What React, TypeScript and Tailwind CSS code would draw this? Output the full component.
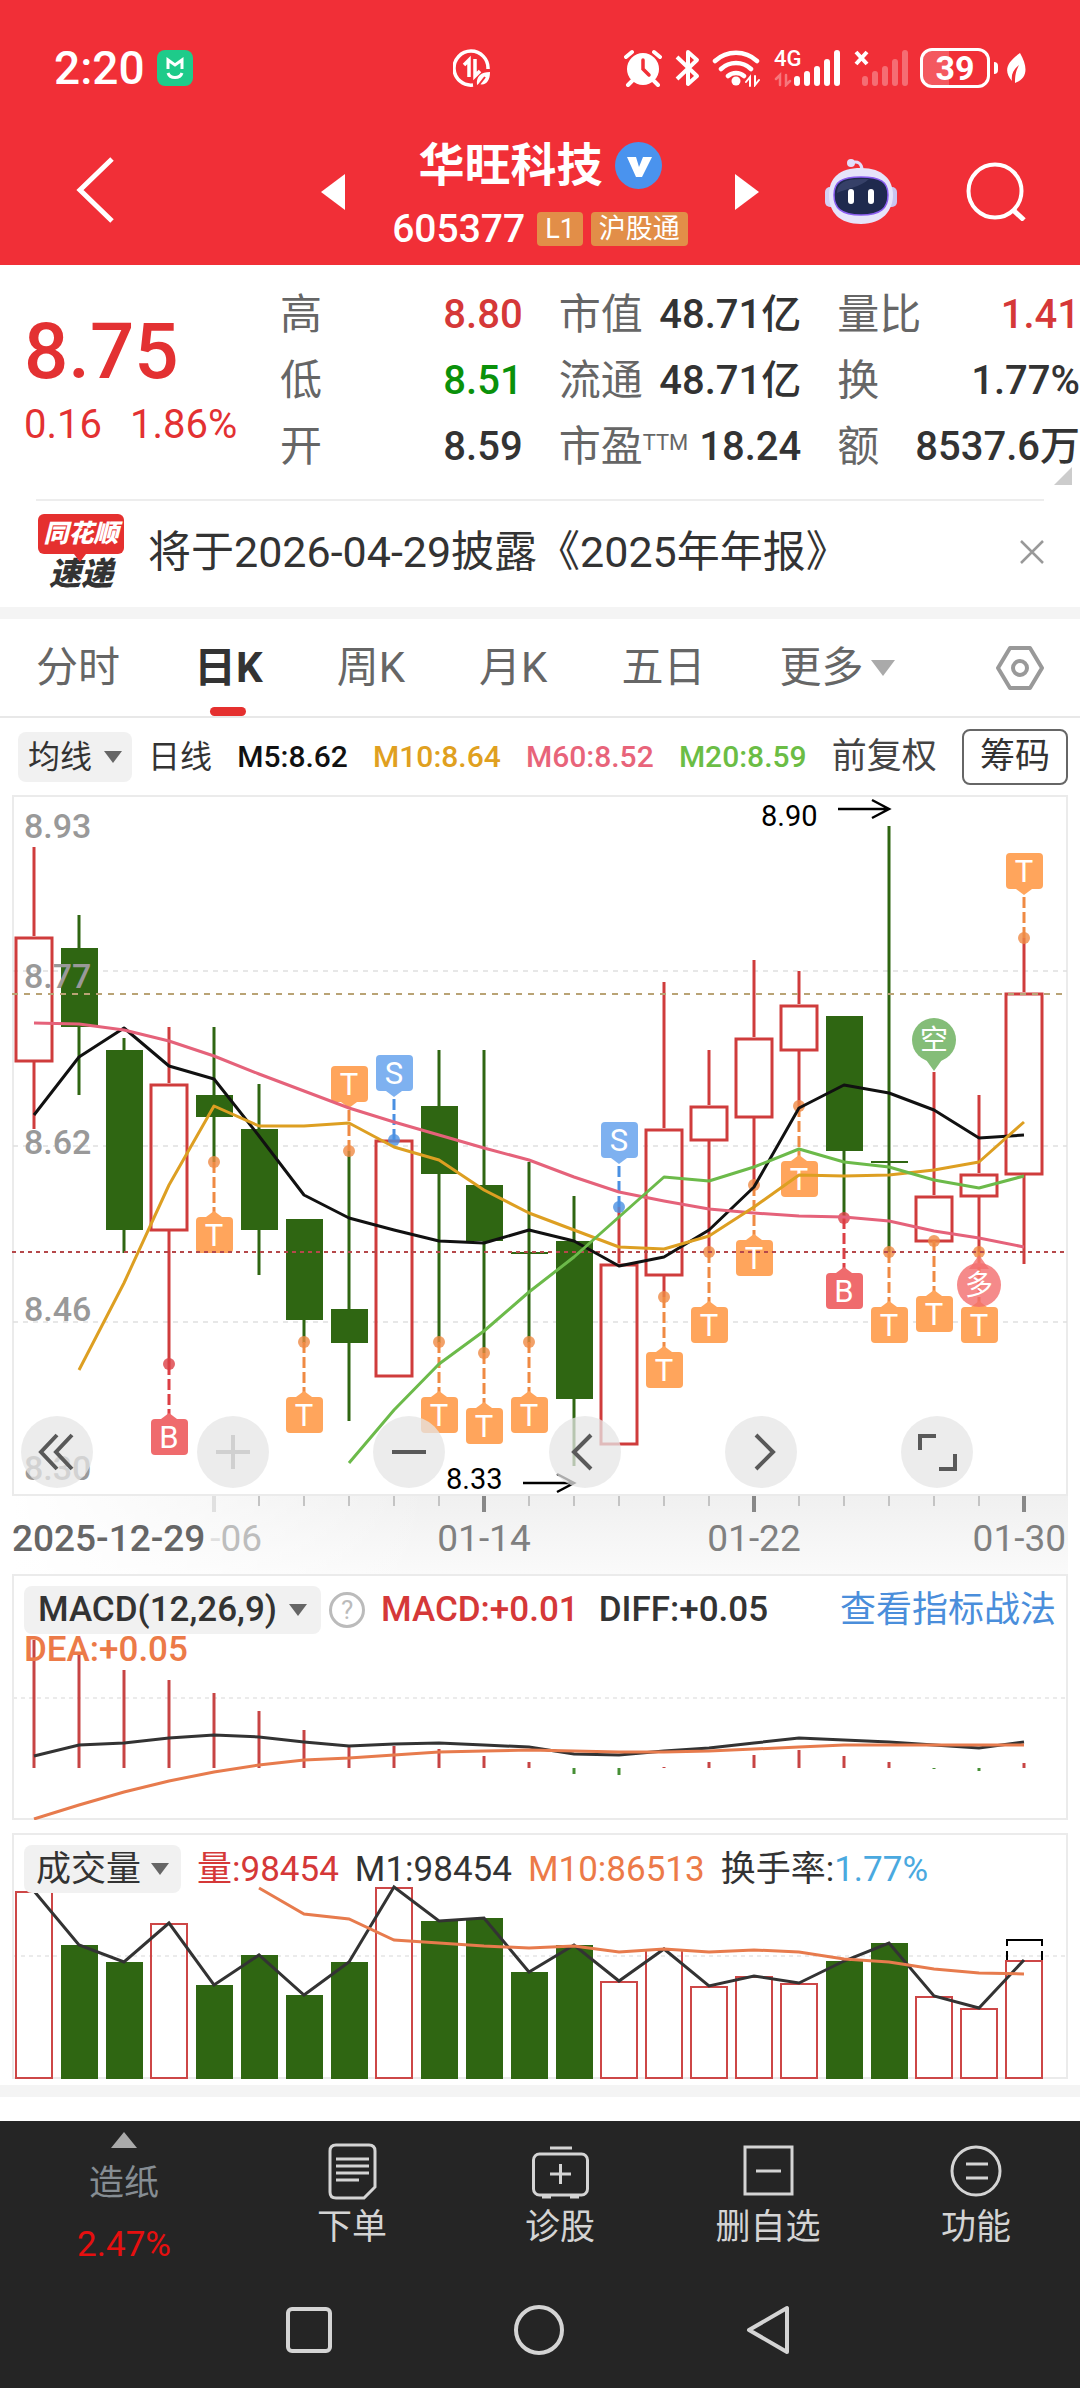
import type { ReactNode } from 'react'

type Candle = { up?: boolean; high: number; top: number; bottom: number; low: number }
type Marker = { i: number; kind: 'T' | 'B' | 'S'; dot: number; above?: boolean }

const GREEN = '#2f6612'
const RED = '#cf3c3c'

const cx = (i: number) => 22 + i * 45
const toPoints = (ys: number[], start = 0) =>
  ys.map((y, k) => `${cx(k + start)},${y}`).join(' ')

const candles: Candle[] = [
  { up: true, high: 52, top: 141, bottom: 267, low: 334 },
  { high: 120, top: 153, bottom: 232, low: 300 },
  { high: 243, top: 255, bottom: 435, low: 458 },
  { up: true, high: 232, top: 288, bottom: 436, low: 569 },
  { high: 232, top: 300, bottom: 322, low: 367 },
  { high: 289, top: 334, bottom: 435, low: 480 },
  { high: 424, top: 424, bottom: 525, low: 548 },
  { high: 356, top: 514, bottom: 548, low: 626 },
  { up: true, high: 344, top: 344, bottom: 582, low: 582 },
  { high: 255, top: 311, bottom: 379, low: 548 },
  { high: 255, top: 390, bottom: 446, low: 558 },
  { high: 367, top: 457, bottom: 459, low: 548 },
  { high: 401, top: 446, bottom: 604, low: 671 },
  { up: true, high: 412, top: 468, bottom: 650, low: 650 },
  { up: true, high: 187, top: 333, bottom: 481, low: 502 },
  { up: true, high: 255, top: 310, bottom: 346, low: 457 },
  { up: true, high: 165, top: 242, bottom: 323, low: 390 },
  { up: true, high: 176, top: 209, bottom: 256, low: 311 },
  { high: 221, top: 221, bottom: 356, low: 422 },
  { high: 31, top: 366, bottom: 368, low: 457 },
  { up: true, high: 277, top: 400, bottom: 447, low: 447 },
  { up: true, high: 300, top: 378, bottom: 402, low: 457 },
  { up: true, high: 143, top: 197, bottom: 380, low: 469 },
]

const markers: Marker[] = [
  { i: 3, kind: 'B', dot: 569 },
  { i: 4, kind: 'T', dot: 367 },
  { i: 6, kind: 'T', dot: 547 },
  { i: 7, kind: 'T', dot: 356, above: true },
  { i: 8, kind: 'S', dot: 345, above: true },
  { i: 9, kind: 'T', dot: 547 },
  { i: 10, kind: 'T', dot: 558 },
  { i: 11, kind: 'T', dot: 547 },
  { i: 13, kind: 'S', dot: 412, above: true },
  { i: 14, kind: 'T', dot: 502 },
  { i: 15, kind: 'T', dot: 457 },
  { i: 16, kind: 'T', dot: 390 },
  { i: 17, kind: 'T', dot: 311 },
  { i: 18, kind: 'B', dot: 423 },
  { i: 19, kind: 'T', dot: 457 },
  { i: 20, kind: 'T', dot: 446 },
  { i: 21, kind: 'T', dot: 457 },
  { i: 22, kind: 'T', dot: 143, above: true },
]

const markerColor = { T: '#ffa55c', B: '#ef6b6d', S: '#7eb1f0' }
const stemColor = { T: '#ef8a43', B: '#dc3f45', S: '#4a90e2' }

const ma5 = [320, 262, 233, 271, 284, 341, 400, 423, 435, 446, 448, 435, 446, 471, 462, 435, 392, 313, 290, 298, 315, 343, 340]
const ma10 = [575, 488, 390, 311, 331, 331, 328, 352, 365, 395, 418, 435, 452, 454, 441, 412, 380, 381, 380, 375, 367, 327]
const ma60 = [228, 229, 235, 246, 261, 279, 296, 313, 327, 340, 353, 365, 382, 397, 406, 414, 418, 421, 422, 426, 436, 443, 452]
const ma20 = [668, 615, 569, 536, 497, 462, 422, 382, 386, 372, 354, 367, 372, 385, 393, 381]

const macdBars = [66, 80, 96, 106, 119, 137, 156, 172, 172, 175, 182, 188, 200, 201, 193, 188, 181, 176, 182, 188, 195, 197, 189]
const diff = [182, 171, 169, 164, 161, 163, 168, 172, 170, 169, 171, 173, 180, 181, 177, 174, 169, 164, 166, 168, 171, 174, 168]
const dea = [245, 231, 218, 207, 198, 191, 186, 184, 181, 178, 177, 176, 177, 178, 178, 177, 175, 173, 171, 171, 171, 171, 171]

const volumes = [58, 112, 129, 90, 152, 122, 162, 129, 54, 88, 85, 139, 112, 148, 116, 153, 143, 150, 128, 110, 163, 175, 127]
const volM10 = [55, 81, 86, 107, 110, 113, 115, 113, 119, 116, 119, 117, 119, 126, 129, 136, 140, 141]

const Down = ({ className }: { className: string }) => (
  <svg viewBox="0 0 18 12" className={className} fill="currentColor">
    <path d="M0 0h18L9 12z" />
  </svg>
)

const StatusBar = () => (
  <div className="flex h-10 items-center pr-[54px] pl-[54px]">
    <div className="flex w-[399px] items-center gap-3">
      <span className="text-[46px] leading-10 font-medium">2:20</span>
      <svg viewBox="0 0 36 36" className="size-9">
        <rect width="36" height="36" rx="8" fill="#1ecb8a" />
        <path d="M11 19V10l7 5 7-5v9M11 23c2 6 12 6 14 0" fill="none" stroke="#fff" strokeWidth="3" />
      </svg>
    </div>
    <svg viewBox="0 0 38 38" className="size-[38px]" fill="none" stroke="#fff" strokeWidth="3.500">
      <path d="M20 36A17 17 0 1 1 35 20" />
      <path d="M11 16l5-5v17M22 10v17l5-5" />
      <path d="M24 36c-1-9 4-13 13-13 0 9-4 14-11 12z" fill="#fff" stroke="none" />
      <path d="M25 37l7-9" stroke="#f12f37" strokeWidth="2" />
    </svg>
    <div className="ml-auto flex items-center">
      <svg viewBox="0 0 38 38" className="size-[38px]" fill="none" stroke="#fff" strokeLinecap="round">
        <circle cx="19" cy="20" r="16" fill="#fff" stroke="none" />
        <path d="M2 8l6-5M30 3l6 5M8 32l-4 4M30 32l4 4" strokeWidth="4" />
        <path d="M19 11v9l6 6" stroke="#f12f37" strokeWidth="3.5" />
      </svg>
      <svg viewBox="0 0 26 38" className="ml-3 h-[38px] w-[26px]" fill="none" stroke="#fff" strokeWidth="4" strokeLinejoin="round">
        <path d="M3 8l20 19-9 8V3l9 8L3 30" />
      </svg>
      <svg viewBox="0 0 48 38" className="ml-3 h-[38px] w-12" fill="none" stroke="#fff" strokeWidth="4.5" strokeLinecap="round">
        <path d="M3 12a31 31 0 0 1 42 0M9 20a22 22 0 0 1 30 0M16 27a12 12 0 0 1 16 0" />
        <circle cx="24" cy="32" r="4.500" fill="#fff" stroke="none" />
        <path d="M34 33l4-5v9M43 27v9l4-5" strokeWidth="2" />
      </svg>
      <div className="relative ml-3.5 h-[38px] w-[68px]">
        <span className="absolute top-0 left-0 text-[22px] leading-5 font-medium">4G</span>
        <svg viewBox="0 0 68 38" className="h-full w-full" fill="none" stroke="#fff" strokeWidth="6" strokeLinecap="round">
          <path d="M23 30v4M33 25v9M43 20v14M53 13v21M63 4v30" />
          <path d="M2 30l4-4v10M12 26v10l4-4" strokeWidth="2.500" opacity=".35" />
        </svg>
      </div>
      <svg viewBox="0 0 54 38" className="ml-3 h-[38px] w-[54px]" fill="none" stroke="#fff" strokeWidth="6" strokeLinecap="round">
        <path d="M2 3l11 12M13 3L2 15" strokeWidth="4" strokeLinecap="butt" />
        <path d="M11 30v4M21 25v9M31 20v14M41 13v21M51 4v30" opacity=".3" />
      </svg>
      <div className="ml-3 flex h-10 w-[70px] items-center justify-center rounded-xl border-[3px] border-white bg-linear-to-r from-white/20 from-40% to-transparent to-40% text-[34px] leading-8 font-bold">
        39
      </div>
      <div className="ml-1 h-3 w-1 rounded-r-full bg-white" />
      <svg viewBox="0 0 20 30" className="ml-2 h-[30px] w-5">
        <path d="M14 0c8 14 8 25-5 30 0-8 1-12 4-18-6 5-8 10-7 16C-3 18 1 9 14 0z" fill="#fff" />
      </svg>
    </div>
  </div>
)

const Header = () => (
  <header className="bg-[#f12f37] pt-12 pb-[5px] text-white">
    <StatusBar />
    <div className="mt-11 flex items-start">
      <div className="flex h-[116px] w-[297px] items-center pl-[76px]">
        <button aria-label="返回">
          <svg viewBox="0 0 38 66" className="h-[66px] w-[38px]" fill="none" stroke="#fff" strokeWidth="5">
            <path d="M36 2L4 33l32 31" />
          </svg>
        </button>
      </div>
      <button aria-label="上一只" className="flex h-[120px] w-12 items-center justify-end">
        <svg viewBox="0 0 24 36" className="h-9 w-6" fill="#fff">
          <path d="M24 0v36L0 18z" />
        </svg>
      </button>
      <div className="flex flex-1 flex-col items-center">
        <div className="flex h-[66px] items-center gap-3">
          <h1 className="text-[46px] leading-none font-bold">华旺科技</h1>
          <svg viewBox="0 0 47 47" className="size-[47px]">
            <circle cx="23.500" cy="23.500" r="23.500" fill="#4a93ee" />
            <path d="M12 15h9l3 10 4-10h9L27 35h-6z" fill="#fff" />
          </svg>
        </div>
        <div className="flex h-[62px] items-center">
          <span className="text-[39px] leading-none font-medium">605377</span>
          <span className="ml-3 rounded-sm bg-[#e28e48] px-2 text-[27px] leading-[34px]">L1</span>
          <span className="ml-2 rounded-sm bg-[#e28e48] px-2 text-[27px] leading-[34px]">沪股通</span>
        </div>
      </div>
      <button aria-label="下一只" className="flex h-[120px] w-12 items-center">
        <svg viewBox="0 0 24 36" className="h-9 w-6" fill="#fff">
          <path d="M0 0v36l24-18z" />
        </svg>
      </button>
      <div className="flex h-[118px] w-[297px] items-center justify-end gap-[69px] pr-[54px]">
        <button aria-label="智能助手">
          <svg viewBox="0 0 72 66" className="h-[66px] w-[72px]">
            <path d="M26 5c7-3 11 1 11 7" fill="none" stroke="#e3ddfa" strokeWidth="3" />
            <circle cx="26" cy="5" r="4" fill="#e3ddfa" />
            <rect x="0" y="29" width="12" height="20" rx="5" fill="#d5d0f4" />
            <rect x="60" y="29" width="12" height="20" rx="5" fill="#c9c5f0" />
            <path d="M36 10c22 0 32 12 32 27S58 66 36 66 4 54 4 37s10-27 32-27z" fill="#e6e4fa" />
            <path d="M36 19c20 0 27 5 27 18s-7 20-27 20S9 50 9 37s7-18 27-18z" fill="#1f2a4e" stroke="#8a5df0" strokeWidth="1.500" />
            <path d="M36 21c-16 0-24 4-24 14 8-4 24-6 32-14z" fill="#46507a" opacity=".6" />
            <rect x="23" y="31" width="6" height="15" rx="3" fill="#fff" />
            <rect x="43" y="31" width="6" height="15" rx="3" fill="#fff" />
          </svg>
        </button>
        <button aria-label="搜索">
          <svg viewBox="0 0 60 60" className="size-[60px]" fill="none" stroke="#fff" strokeWidth="4">
            <circle cx="29" cy="30" r="26.500" />
            <path d="M47 49l11 10" strokeWidth="5" />
          </svg>
        </button>
      </div>
    </div>
  </header>
)

const Stat = ({ label, value, tone = 'text-[#333]' }: { label: ReactNode; value: string; tone?: string }) => (
  <div className="flex h-[66px] items-center justify-between whitespace-nowrap">
    <dt className="text-[42px] text-[#666]">{label}</dt>
    <dd className={`text-[40px] font-medium ${tone}`}>{value}</dd>
  </div>
)

const Quote = () => (
  <section className="relative flex pt-[17px] pb-[19px]">
    <div className="w-[280px] shrink-0 pt-[30px] pl-6 text-[#e33132]">
      <div className="text-[78px] leading-20 font-medium">8.75</div>
      <div className="flex gap-7 text-[40px] leading-[66px]">
        <span>0.16</span>
        <span>1.86%</span>
      </div>
    </div>
    <dl className="grid flex-1 grid-cols-3 gap-x-9 leading-[66px]">
      <Stat label="高" value="8.80" tone="text-[#d53838]" />
      <Stat label="市值" value="48.71亿" />
      <Stat label="量比" value="1.41" tone="text-[#d53838]" />
      <Stat label="低" value="8.51" tone="text-[#0a910a]" />
      <Stat label="流通" value="48.71亿" />
      <Stat label="换" value="1.77%" />
      <Stat label="开" value="8.59" />
      <Stat
        label={
          <>
            市盈<sup className="text-[22px]">TTM</sup>
          </>
        }
        value="18.24"
      />
      <Stat label="额" value="8537.6万" />
    </dl>
    <svg viewBox="0 0 18 18" className="absolute right-2 bottom-3.5 size-[18px]" fill="#ccc">
      <path d="M18 0v18H0z" />
    </svg>
  </section>
)

const News = () => (
  <section className="flex h-[106px] items-center pr-9 pb-1 pl-[38px]">
    <div className="flex w-[86px] flex-col items-center italic">
      <div className="relative w-full rounded-md bg-[#e5302f] text-center text-[25px] leading-10 font-black text-white">
        同花顺
        <svg viewBox="0 0 12 8" className="absolute top-full left-9 h-2 w-3" fill="#e5302f">
          <path d="M0 0h12L6 8z" />
        </svg>
      </div>
      <div className="mt-1 text-[32px] leading-8 font-black text-[#333]">速递</div>
    </div>
    <a href="#report" className="ml-6 flex-1 text-[43px] leading-none text-[#333]">
      将于2026-04-29披露《2025年年报》
    </a>
    <button aria-label="关闭">
      <svg viewBox="0 0 24 24" className="size-6" fill="none" stroke="#999" strokeWidth="2.500">
        <path d="M1 1l22 22M23 1L1 23" />
      </svg>
    </button>
  </section>
)

const tabs = ['分时', '日K', '周K', '月K', '五日']

const Tabs = () => (
  <nav className="flex h-[99px] items-center border-b-2 border-[#e8e8e8] pr-9 pl-9 text-[42px] text-[#666]">
    <div className="flex h-full gap-[74px]">
      {tabs.map((tab) => (
        <button key={tab} className={`relative ${tab === '日K' ? 'font-bold text-[#333]' : ''}`}>
          {tab}
          {tab === '日K' && (
            <span className="absolute bottom-0 left-1/2 h-[9px] w-9 -translate-x-1/2 rounded-full bg-[#e5302f]" />
          )}
        </button>
      ))}
      <button className="flex items-center gap-2">
        更多
        <Down className="h-4 w-6 text-[#aaa]" />
      </button>
    </div>
    <button aria-label="设置" className="ml-auto">
      <svg viewBox="0 0 48 48" className="size-12" fill="none" stroke="#999" strokeWidth="4" strokeLinejoin="round">
        <path d="M14 4h20l12 20-12 20H14L2 24z" />
        <circle cx="24" cy="24" r="7" />
      </svg>
    </button>
  </nav>
)

const Legend = () => (
  <div className="flex h-[77px] items-center justify-between pr-3 pl-[18px] text-[30px] leading-none whitespace-nowrap">
    <div className="flex items-center gap-4">
      <button className="flex h-[50px] items-center gap-3 rounded-lg bg-[#f1f1f1] px-2.5 text-[32px] text-[#333]">
        均线
        <Down className="h-3 w-[18px] text-[#666]" />
      </button>
      <span className="text-[32px] text-[#333]">日线</span>
    </div>
    <span className="font-medium text-[#111]">M5:8.62</span>
    <span className="font-medium text-[#e0a020]">M10:8.64</span>
    <span className="font-medium text-[#e8647a]">M60:8.52</span>
    <span className="font-medium text-[#6bbd45]">M20:8.59</span>
    <span className="text-[35px] text-[#444]">前复权</span>
    <button className="h-14 rounded-lg border-2 border-[#666] px-4 text-[35px] text-[#333]">筹码</button>
  </div>
)

const Badge = ({ i, kind, dot, above }: Marker) => {
  const x = cx(i)
  const top = above ? dot - 85 : dot + 55
  return (
    <g>
      <path
        d={above ? `M${x} ${dot}V${top + 40}` : `M${x} ${dot}V${top - 4}`}
        stroke={stemColor[kind]}
        strokeWidth="3"
        strokeDasharray="11 4"
      />
      <circle cx={x} cy={dot} r="6" fill={stemColor[kind]} opacity=".8" />
      <path
        d={above ? `M${x - 8} ${top + 36}h16l-8 6z` : `M${x - 8} ${top}h16l-8 -6z`}
        fill={markerColor[kind]}
      />
      <rect x={x - 18} y={top} width="37" height="36" rx="4" fill={markerColor[kind]} />
      <text x={x} y={top + 29} textAnchor="middle" fontSize="31" fill="#fff">
        {kind}
      </text>
    </g>
  )
}

const KChart = () => (
  <svg viewBox="0 0 1056 701" className="block h-auto w-full overflow-visible" fill="none">
    <rect x="1" y="1" width="1054" height="699" stroke="#ebebeb" strokeWidth="2" />
    <path d="M1 176h1054M1 351h1054M1 527h1054" stroke="#e0e0e0" strokeWidth="1.500" strokeDasharray="5 5" />
    {candles.map((c, i) => (
      <g key={i} stroke={c.up ? RED : GREEN} strokeWidth="3">
        <path d={`M${cx(i)} ${c.high}V${c.top}M${cx(i)} ${c.bottom}V${c.low}`} />
        {c.up ? (
          <rect x={cx(i) - 18} y={c.top + 2} width="36" height={c.bottom - c.top - 3} />
        ) : (
          <rect x={cx(i) - 18} y={c.top} width="37" height={c.bottom - c.top} fill={GREEN} stroke="none" />
        )}
      </g>
    ))}
    <path d="M0 199h1055" stroke="#b9a375" strokeWidth="2" strokeDasharray="6 6" />
    <g fontSize="34" fontWeight="500" fill="#999">
      <text x="12" y="43">8.93</text>
      <text x="12" y="193">8.77</text>
      <text x="12" y="359">8.62</text>
      <text x="12" y="526">8.46</text>
      <text x="12" y="685">8.30</text>
    </g>
    {markers.map((m) => (
      <Badge key={m.i} {...m} />
    ))}
    <path d="M0 457h1055" stroke="#b5484a" strokeWidth="2" strokeDasharray="4 4" />
    <g strokeWidth="3" strokeLinejoin="round">
      <polyline points={toPoints(ma5)} stroke="#111" />
      <polyline points={toPoints(ma60)} stroke="#e5627a" />
      <polyline points={toPoints(ma10, 1)} stroke="#dd9f22" />
      <polyline points={toPoints(ma20, 7)} stroke="#6cba4a" />
    </g>
    <g fontSize="28" fill="#fff" textAnchor="middle">
      <path d={`M${cx(20) - 10} 262h20l-10 14z`} fill="#84bd78" />
      <circle cx={cx(20)} cy="245" r="22" fill="#84bd78" />
      <text x={cx(20)} y="255">空</text>
      <path d={`M${cx(21) - 10} 474h20l-10 -14z`} fill="#f36d6d" opacity=".8" />
      <circle cx={cx(21)} cy="490" r="22" fill="#f36d6d" opacity=".8" />
      <text x={cx(21)} y="500">多</text>
    </g>
    <g fontSize="29" fill="#000">
      <text x="749" y="31">8.90</text>
      <text x="434" y="694">8.33</text>
    </g>
    <path d="M826 14h50M860 5l17 9-17 9M511 688h50M545 679l17 9-17 9" stroke="#000" strokeWidth="2.500" />
  </svg>
)

const Controls = () => {
  const icons: [string, string][] = [
    ['最左', 'M36 19L20 36l16 17M51 19L35 36l16 17'],
    ['放大', 'M36 19v34M19 36h34'],
    ['缩小', 'M19 36h34'],
    ['左移', 'M42 19L25 36l17 17'],
    ['右移', 'M31 19l17 17-17 17'],
    ['全屏', 'M19 34V20h16M38 53h16V38'],
  ]
  return (
    <div className="absolute bottom-2 left-[9px] flex gap-[104px]">
      {icons.map(([label, d]) => (
        <button key={label} aria-label={label} className="size-[72px] rounded-full bg-[#e6e6e6]/75">
          <svg viewBox="0 0 72 72" className="size-full" fill="none" stroke={label === '放大' ? '#d0d0d0' : '#595959'} strokeWidth="4">
            <path d={d} />
          </svg>
        </button>
      ))}
    </div>
  )
}

const Axis = () => (
  <svg viewBox="0 0 1056 78" className="block h-auto w-full">
    <defs>
      <linearGradient id="shade" x1="0" y1="0" x2="0" y2="1">
        <stop offset="0" stopColor="#f0f0f0" />
        <stop offset="1" stopColor="#fafafa" />
      </linearGradient>
      <linearGradient id="fade">
        <stop offset="0" stopColor="#fff" />
        <stop offset="1" stopColor="#fff" stopOpacity="0" />
      </linearGradient>
    </defs>
    <rect width="1056" height="78" fill="url(#shade)" />
    <rect width="420" height="78" fill="url(#fade)" />
    {candles.map((_, i) =>
      i < 4 ? null : i % 6 === 4 ? (
        <rect key={i} x={cx(i) - 2} width="4" height="16" fill={i === 4 ? '#e0e0e0' : '#888'} />
      ) : (
        <rect key={i} x={cx(i) - 1} width="2" height="10" fill="#c4c4c4" />
      ),
    )}
    <g fontSize="37" fill="#808080">
      <text x="472" y="55" textAnchor="middle">01-14</text>
      <text x="742" y="55" textAnchor="middle">01-22</text>
      <text x="1054" y="55" textAnchor="end">01-30</text>
    </g>
    <text x="0" y="55" fontSize="37" fontWeight="500" fill="#666">
      2025-12-29
    </text>
    <text x="250" y="55" fontSize="37" textAnchor="end" fill="#bdbdbd">
      <tspan fill="#e0e0e0">-</tspan>06
    </text>
  </svg>
)

const Macd = () => (
  <section className="relative">
    <svg viewBox="0 0 1056 246" className="block h-auto w-full" fill="none">
      <rect x="1" y="1" width="1054" height="244" stroke="#ebebeb" strokeWidth="2" />
      <path d="M1 124h1054" stroke="#ebebeb" strokeWidth="2" strokeDasharray="4 4" />
      {macdBars.map((y, i) => (
        <path key={i} d={`M${cx(i)} 194V${y}`} stroke={y > 194 ? '#468f35' : '#c74444'} strokeWidth="3" />
      ))}
      <polyline points={toPoints(diff)} stroke="#333" strokeWidth="3" />
      <polyline points={toPoints(dea)} stroke="#e77b4d" strokeWidth="3" />
    </svg>
    <div className="absolute inset-x-3 top-3 text-[35px] leading-8 whitespace-nowrap">
      <div className="flex h-12 items-center">
        <button className="flex h-12 items-center gap-3 rounded-lg bg-[#f1f1f1] px-3.5 font-medium text-[#333]">
          MACD(12,26,9)
          <Down className="h-3 w-[18px] text-[#666]" />
        </button>
        <button
          aria-label="说明"
          className="mr-4 ml-2 size-9 rounded-full border-[3px] border-[#bbb] text-[26px] leading-7 text-[#bbb]"
        >
          ?
        </button>
        <span className="font-medium text-[#d53838]">MACD:+0.01</span>
        <span className="ml-5 font-medium text-[#333]">DIFF:+0.05</span>
        <a href="#guide" className="ml-auto text-[36px] text-[#4a8edb]">
          查看指标战法
        </a>
      </div>
      <div className="font-medium text-[#ec7a48]">DEA:+0.05</div>
    </div>
  </section>
)

const Volume = () => (
  <section className="relative mt-[13px]">
    <svg viewBox="0 0 1056 246" className="block h-auto w-full overflow-visible" fill="none">
      <rect x="1" y="1" width="1054" height="244" stroke="#ebebeb" strokeWidth="2" />
      <path d="M1 123h1054" stroke="#ebebeb" strokeWidth="2" strokeDasharray="4 4" />
      {volumes.map((y, i) =>
        candles[i].up ? (
          <rect key={i} x={cx(i) - 18} y={y + 1} width="36" height={244 - y} stroke="#cd4747" strokeWidth="2" />
        ) : (
          <rect key={i} x={cx(i) - 18} y={y} width="37" height={246 - y} fill={GREEN} />
        ),
      )}
      <polyline points={toPoints(volumes)} stroke="#333" strokeWidth="3" />
      <polyline points={toPoints(volM10, 5)} stroke="#e77b4d" strokeWidth="3" />
      <path d="M995 127v-9M1030 127v-9M995 113v-6h35v6" stroke="#000" strokeWidth="2" />
    </svg>
    <div className="absolute inset-x-3 top-3 flex h-12 items-center gap-4 text-[35px] leading-none whitespace-nowrap text-[#333]">
      <button className="flex h-12 items-center gap-2.5 rounded-lg bg-[#f1f1f1] px-3">
        成交量
        <Down className="h-3 w-[18px] text-[#666]" />
      </button>
      <span className="text-[#d53838]">量:98454</span>
      <span>M1:98454</span>
      <span className="text-[#ec7a48]">M10:86513</span>
      <span>
        换手率:<span className="text-[#4aa9df]">1.77%</span>
      </span>
    </div>
  </section>
)

const actions: { label: string; icon: ReactNode }[] = [
  {
    label: '下单',
    icon: (
      <>
        <path d="M12 3h33q6 0 6 6v36L40 56H12q-6 0-6-6V9q0-6 6-6z" />
        <path d="M12 17h33M12 24h33M12 31h33M12 38h23" />
      </>
    ),
  },
  {
    label: '诊股',
    icon: (
      <>
        <rect x="1.500" y="12" width="54" height="41" rx="6" />
        <path d="M18 6h22M28.500 22v20M18 32h21M10 55h9M38 55h9" />
      </>
    ),
  },
  {
    label: '删自选',
    icon: (
      <>
        <rect x="5" y="5" width="47" height="47" />
        <path d="M16 29h25" />
      </>
    ),
  },
  {
    label: '功能',
    icon: (
      <>
        <circle cx="28" cy="29" r="24" />
        <path d="M18 22h22M18 36h22" />
      </>
    ),
  },
]

const BottomBar = () => (
  <footer className="bg-[#252525] text-[35px] leading-none text-[#d4d4d4]">
    <div className="flex h-[150px] items-start">
      <button className="flex w-[248px] flex-col items-center text-[#868d93]">
        <svg viewBox="0 0 26 16" className="mt-[11px] h-4 w-[26px]" fill="#aaa">
          <path d="M13 0l13 16H0z" />
        </svg>
        <span className="mt-[18px]">造纸</span>
        <span className="mt-[26px] text-[#e60f0f]">2.47%</span>
      </button>
      {actions.map(({ label, icon }) => (
        <button key={label} className="flex flex-1 flex-col items-center pt-[21px]">
          <svg viewBox="0 0 57 58" className="h-[58px] w-[57px]" fill="none" stroke="#d4d4d4" strokeWidth="3">
            {icon}
          </svg>
          <span className="mt-2.5">{label}</span>
        </button>
      ))}
    </div>
    <div className="flex h-[117px] items-center justify-center gap-[182px] pr-1">
      <button aria-label="最近任务" className="size-[46px] rounded-md border-4 border-[#d4d4d4]" />
      <button aria-label="主屏幕" className="size-[50px] rounded-full border-4 border-[#d4d4d4]" />
      <button aria-label="后退">
        <svg viewBox="0 0 44 50" className="h-[50px] w-11" fill="none" stroke="#d4d4d4" strokeWidth="4" strokeLinejoin="round">
          <path d="M41 3v44L3 25z" />
        </svg>
      </button>
    </div>
  </footer>
)

export default function App() {
  return (
    <div className="w-full bg-white font-['Roboto','Noto_Sans_CJK_SC',sans-serif]">
      <Header />
      <Quote />
      <hr className="mx-9 border-t-2 border-[#ededed]" />
      <News />
      <div className="h-3 bg-[#f4f4f4]" />
      <Tabs />
      <Legend />
      <main className="mx-3">
        <div className="relative">
          <KChart />
          <Controls />
        </div>
        <Axis />
        <Macd />
        <Volume />
      </main>
      <div className="mt-1.5 mb-6 h-3 bg-[#f4f4f4]" />
      <BottomBar />
    </div>
  )
}
